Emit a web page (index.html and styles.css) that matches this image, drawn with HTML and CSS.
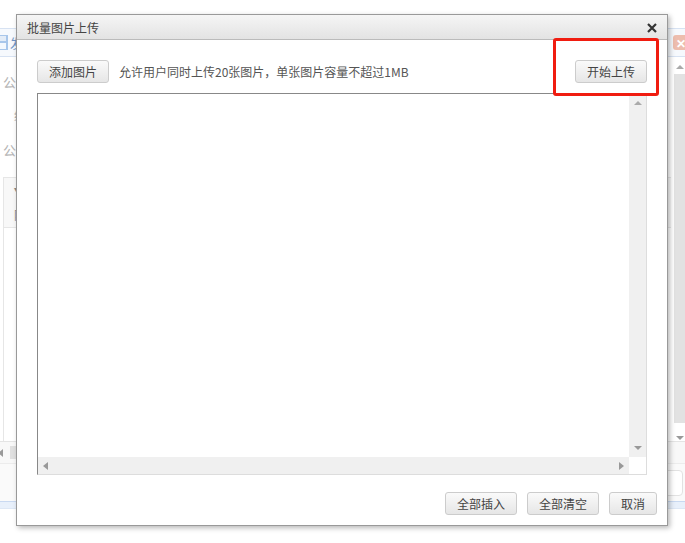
FILE: index.html
```html
<!DOCTYPE html>
<html lang="zh">
<head>
<meta charset="utf-8">
<title>批量图片上传</title>
<link rel="stylesheet" href="styles.css">
</head>
<body>
<div class="page">
  <div class="page-head">
    <svg class="save-icon" width="8" height="15" viewBox="0 0 8 15"><rect x="-6" y="0" width="14" height="15" fill="#a8c6ea"/><rect x="-4" y="1" width="10" height="5" fill="#e3ecf7"/><rect x="-3" y="8" width="9" height="6" fill="#f4f8fd"/></svg>
    <span class="head-text">发</span>
    <span class="head-close">✕</span>
  </div>
  <div class="page-body">
    <div class="page-main">
      <div class="line line-a">公</div>
      <div class="line line-b">编</div>
      <div class="line line-c">公</div>
      <div class="panel">
        <div class="panel-head"><span class="panel-t1">▾</span><span class="panel-t2">附</span></div>
      </div>
    </div>
    <div class="page-scroll">
      <span class="arrow-up"></span>
      <span class="page-thumb"></span>
      <span class="arrow-down"></span>
    </div>
  </div>
  <div class="page-hscroll"><span class="arrow-left"></span><span class="hthumb"></span></div>
  <div class="page-foot"><span class="foot-btn"></span></div>
  <div class="page-strip"></div>
</div>

<div class="dialog">
  <div class="dialog-title">
    <span>批量图片上传</span>
    <svg class="x" width="10" height="10" viewBox="0 0 10 10"><path d="M1 1L9 9M9 1L1 9" stroke="#333" stroke-width="2.2"/></svg>
  </div>
  <div class="dialog-body">
    <div class="toolbar">
      <button class="btn">添加图片</button>
      <span class="hint">允许用户同时上传20张图片，单张图片容量不超过1MB</span>
      <button class="btn">开始上传</button>
    </div>
    <div class="list">
      <div class="list-top">
        <div class="list-area"></div>
        <div class="vbar"><span class="arrow-up"></span><span class="arrow-down"></span></div>
      </div>
      <div class="list-bottom">
        <div class="hbar"><span class="arrow-left"></span><span class="arrow-right"></span></div>
        <div class="corner"></div>
      </div>
    </div>
  </div>
  <div class="dialog-foot">
    <button class="btn">全部插入</button>
    <button class="btn">全部清空</button>
    <button class="btn btn-small">取消</button>
  </div>
</div>
<div class="highlight"></div>
</body>
</html>
```
FILE: styles.css
```css
* { box-sizing: border-box; }
html, body { margin: 0; height: 100%; }
body {
  position: relative;
  width: 685px;
  height: 543px;
  overflow: hidden;
  background: #fff;
  font-family: "Noto Sans CJK SC", "Liberation Sans", sans-serif;
  font-size: 12px;
  color: #555;
}
.page { padding-top: 28px; display: flex; flex-direction: column; }
.page-head {
  flex: none;
  height: 29px;
  display: flex;
  align-items: center;
  background: #f6f9fd;
  border: 1px solid #d7e2f2;
  border-width: 1px 0;
  position: relative;
}
.save-icon { flex: none; }
.head-text { margin-left: 2px; color: #6f94c6; font-size: 13px; }
.head-close {
  position: absolute;
  left: 673px;
  top: 6px;
  width: 16px;
  height: 15px;
  border-radius: 3px;
  background: #edbdae;
  color: #fff;
  font-size: 12px;
  font-weight: 700;
  line-height: 15px;
  text-align: center;
}
.page-body { flex: none; height: 384px; display: flex; }
.page-main { flex: 1; padding: 0 3px; min-width: 0; }
.line { color: #b4b4b4; font-size: 13px; line-height: 18px; }
.line-a { margin-top: 16px; }
.line-b { margin-top: 15px; padding-left: 11px; }
.line-c { margin-top: 17px; }
.panel { margin-top: 18px; height: 264px; border: 1px solid #e6e6e6; border-right: 0; border-bottom: 0; }
.panel-head { height: 50px; background: #f8f8f8; border-bottom: 1px solid #e6e6e6; display: flex; flex-direction: column; padding-left: 10px; color: #888; line-height: 18px; }
.panel-t1 { font-size: 8px; margin-top: 2px; }
.panel-t2 { margin-top: 8px; }
.page-scroll {
  flex: none;
  width: 11px;
  display: flex;
  flex-direction: column;
  align-items: center;
  padding-top: 8px;
  background: #fff;
}
.page-thumb { width: 11px; height: 349px; margin: 5px 0 13px; background: #e2e2e2; }
.page-hscroll {
  flex: none;
  height: 23px;
  border-top: 1px solid #e4e4e4;
  border-bottom: 1px solid #ececec;
  display: flex;
  align-items: center;
  background: #f8f8f8;
}
.page-hscroll .arrow-left { margin-left: -2px; }
.hthumb { width: 6px; height: 13px; background: #e0e0e0; margin-left: 7px; }
.page-foot { flex: none; height: 37px; background: #fafafa; display: flex; justify-content: flex-end; padding: 6px 2px 0 0; }
.foot-btn { width: 30px; height: 26px; border: 1px solid #e2e2e2; border-radius: 4px; background: #fff; }
.page-strip { flex: none; height: 8px; background: #e8f0fb; border-top: 1px solid #c9d9f1; border-bottom: 1px solid #dde7f5; }

.arrow-up, .arrow-down, .arrow-left, .arrow-right { display: block; width: 0; height: 0; flex: none; border-style: solid; border-color: transparent; }
.arrow-up { border-width: 0 4px 4px; border-bottom-color: #aaa; }
.arrow-down { border-width: 4px 4px 0; border-top-color: #999; }
.arrow-left { border-width: 4px 5px 4px 0; border-right-color: #999; }
.arrow-right { border-width: 4px 0 4px 5px; border-left-color: #999; }

.dialog {
  position: absolute;
  left: 16px;
  top: 14px;
  width: 652px;
  height: 512px;
  background: #fff;
  border: 1px solid #999;
  box-shadow: 2px 2px 5px rgba(0, 0, 0, 0.28);
  display: flex;
  flex-direction: column;
}
.dialog-title {
  flex: none;
  height: 25px;
  padding: 1px 10px 0;
  display: flex;
  align-items: center;
  justify-content: space-between;
  background: linear-gradient(#f5f5f5, #e3e3e3);
  border-bottom: 1px solid #bbb;
  color: #444;
  line-height: 23px;
}
.x { margin-top: 1px; }
.dialog-body { flex: none; padding: 20px 20px 0; }
.toolbar { display: flex; align-items: center; height: 23px; }
.hint { flex: 1; margin-left: 10px; color: #555; }
.btn {
  width: 72px;
  height: 23px;
  padding: 0;
  border: 1px solid #ccc;
  border-radius: 3px;
  background: linear-gradient(#fafafa, #e6e6e6);
  font: inherit;
  color: #444;
  line-height: 21px;
}
.btn-small { width: 48px; }
.list {
  margin-top: 10px;
  width: 610px;
  height: 382px;
  border: 1px solid #ddd;
  border-top-color: #888;
  border-left-color: #888;
  display: flex;
  flex-direction: column;
}
.list-top { flex: 1; display: flex; min-height: 0; }
.list-area { flex: 1; }
.vbar {
  flex: none;
  width: 17px;
  background: #f0f0f0;
  display: flex;
  flex-direction: column;
  align-items: center;
  justify-content: space-between;
  padding: 7px 0 7px;
}
.list-bottom { flex: none; height: 17px; display: flex; }
.hbar {
  flex: 1;
  background: #f0f0f0;
  display: flex;
  align-items: center;
  justify-content: space-between;
  padding: 0 5px;
}
.corner { width: 17px; background: #fff; }
.dialog-foot { flex: none; margin-top: 17px; padding-right: 10px; display: flex; justify-content: flex-end; gap: 10px; }

.highlight {
  position: absolute;
  left: 553px;
  top: 38px;
  width: 106px;
  height: 58px;
  border: 3px solid #f01c10;
  border-radius: 3px;
}
```
